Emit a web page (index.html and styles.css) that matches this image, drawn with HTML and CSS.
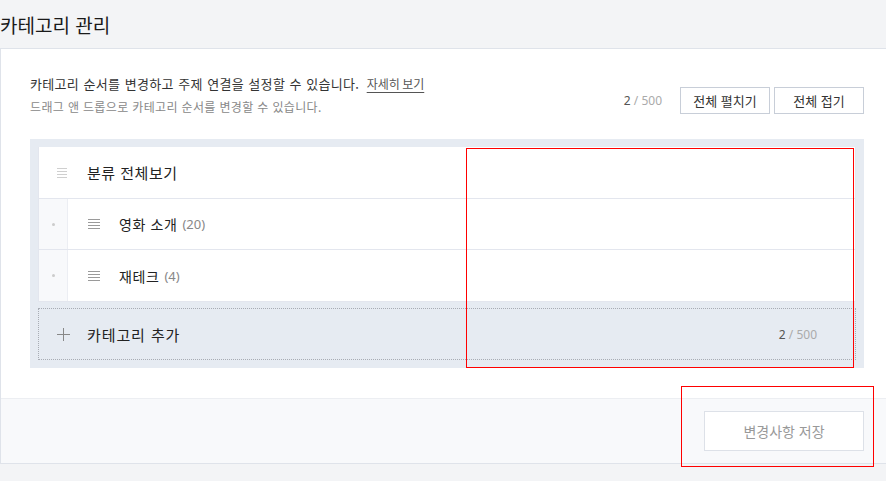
FILE: index.html
```html
<!DOCTYPE html>
<html lang="ko">
<head>
<meta charset="utf-8">
<title>카테고리 관리</title>
<link rel="stylesheet" href="styles.css">
</head>
<body>
<h1 class="page-title">카테고리 관리</h1>
<div class="card">
  <div class="card-body">
    <div class="top">
      <div class="desc">
        <p class="desc-main">카테고리 순서를 변경하고 주제 연결을 설정할 수 있습니다. <a class="more" href="#">자세히 보기</a></p>
        <p class="desc-sub">드래그 앤 드롭으로 카테고리 순서를 변경할 수 있습니다.</p>
      </div>
      <div class="actions">
        <span class="count"><b>2</b> / 500</span>
        <button class="btn">전체 펼치기</button>
        <button class="btn">전체 접기</button>
      </div>
    </div>
    <div class="tree">
      <ul class="list">
        <li class="row root">
          <span class="grip light"><i></i><i></i><i></i><i></i></span>
          <span class="name">분류 전체보기</span>
        </li>
        <li class="row child">
          <span class="indent"><i class="dot"></i></span>
          <span class="grip"><i></i><i></i><i></i><i></i></span>
          <span class="name">영화 소개</span><span class="num">(20)</span>
        </li>
        <li class="row child">
          <span class="indent"><i class="dot"></i></span>
          <span class="grip"><i></i><i></i><i></i><i></i></span>
          <span class="name">재테크</span><span class="num">(4)</span>
        </li>
      </ul>
      <div class="add">
        <span class="plus"></span>
        <span class="add-label">카테고리 추가</span>
        <span class="count add-count"><b>2</b> / 500</span>
      </div>
    </div>
  </div>
  <div class="footer">
    <button class="save">변경사항 저장</button>
  </div>
</div>
<div class="mark mark-a"></div>
<div class="mark mark-b"></div>
</body>
</html>
```

FILE: styles.css
```css
* { box-sizing: border-box; }
html, body { margin: 0; padding: 0; }
body {
  background: #f3f4f6;
  font-family: "Noto Sans CJK KR", "Noto Sans", sans-serif;
  color: #222;
  overflow: hidden;
  width: 886px;
  height: 481px;
  position: relative;
}
.page-title {
  margin: 0;
  height: 48px;
  padding-top: 1px;
  line-height: 48px;
  font-size: 19px;
  font-weight: 400;
  color: #1a1a1a;
}
.card {
  width: 894px;
  background: #fff;
  border-top: 1px solid #dfe3ea;
  border-left: 1px solid #dfe3ea;
  border-bottom: 1px solid #dfe3ea;
}
.card-body {
  padding: 25px 30px 30px 29px;
}
.top {
  display: flex;
  justify-content: space-between;
  align-items: flex-start;
}
.desc p { margin: 0; }
.desc-main {
  font-size: 13px;
  line-height: 20px;
  color: #333;
  letter-spacing: 0.3px;
  word-spacing: 0.5px;
}
.more {
  color: #555;
  font-size: 12px;
  text-decoration: underline;
  text-underline-offset: 3px;
  margin-left: 3px;
  letter-spacing: 0;
  word-spacing: -1px;
}
.desc-sub {
  margin-top: 3px !important;
  font-size: 12px;
  line-height: 20px;
  color: #888;
  letter-spacing: 0.35px;
}
.actions {
  display: flex;
  align-items: center;
  gap: 4px;
  margin-top: 13px;
}
.count {
  font-family: "Noto Sans", sans-serif;
  font-size: 12px;
  color: #aaa;
  margin-right: 14px;
}
.count b { font-weight: 400; color: #555; }
.btn {
  width: 90px;
  height: 27px;
  background: #fff;
  border: 1px solid #c8ced8;
  font-family: inherit;
  font-size: 13px;
  color: #333;
  padding: 0;
  cursor: pointer;
}
.tree {
  margin-top: 22px;
  background: #e6ebf2;
  padding: 8px;
}
.list {
  list-style: none;
  margin: 0;
  padding: 0;
  background: #fff;
  border: 1px solid #e3e6ee;
  border-top: 0;
}
.row {
  display: flex;
  align-items: center;
  height: 51px;
  border-bottom: 1px solid #e3e6ee;
}
.row:last-child { border-bottom: 0; height: 51px; }
.root { height: 52px; }
.grip {
  display: flex;
  flex-direction: column;
  gap: 2px;
  width: 12px;
}
.grip i {
  display: block;
  height: 1px;
  background: #9a9a9a;
}
.grip.light { width: 10px; margin-left: 18px; margin-right: 20px; }
.grip.light i { background: #cfcfcf; }
.name {
  font-size: 15px;
  color: #222;
  letter-spacing: 0.5px;
}
.child .name { font-size: 14px; letter-spacing: 0.6px; }
.child .grip { margin-left: 20px; margin-right: 19px; }
.indent {
  align-self: stretch;
  width: 29px;
  background: #f8f9fb;
  border-right: 1px solid #eceef3;
  display: flex;
  align-items: center;
  justify-content: center;
}
.dot {
  display: block;
  width: 3px;
  height: 3px;
  border-radius: 50%;
  background: #ccc;
}
.num {
  margin-left: 5px;
  font-family: "Noto Sans", sans-serif;
  font-size: 13px;
  color: #888;
}
.add {
  margin-top: 6px;
  height: 52px;
  border: 1px dotted #a8acb4;
  display: flex;
  align-items: center;
}
.plus {
  position: relative;
  width: 13px;
  height: 13px;
  margin-left: 18px;
  margin-right: 17px;
}
.plus::before, .plus::after {
  content: "";
  position: absolute;
  background: #888;
}
.plus::before { left: 0; right: 0; top: 6px; height: 1px; }
.plus::after { top: 0; bottom: 0; left: 6px; width: 1px; }
.add-label {
  font-size: 15px;
  color: #222;
  letter-spacing: 0.9px;
}
.add-count { margin-left: auto; margin-right: 38px; }
.footer {
  background: #f8f9fb;
  border-top: 1px solid #eceef2;
  padding: 12px 30px 12px 0;
  display: flex;
  justify-content: flex-end;
}
.save {
  width: 160px;
  height: 40px;
  background: #fff;
  border: 1px solid #dde1e8;
  font-family: inherit;
  font-size: 14px;
  color: #999;
  padding: 0;
}
.mark {
  position: absolute;
  border: 1px solid #ff0000;
  pointer-events: none;
}
.mark-a { left: 466px; top: 148px; width: 388px; height: 220px; }
.mark-b { left: 681px; top: 386px; width: 193px; height: 81px; }
```
